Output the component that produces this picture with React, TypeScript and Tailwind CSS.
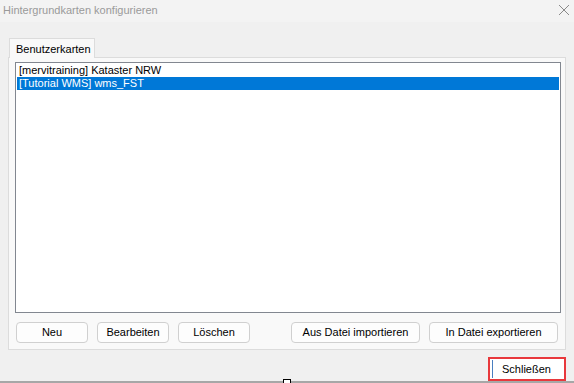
import React from 'react';

const items = ['[mervitraining] Kataster NRW', '[Tutorial WMS] wms_FST'];

const Btn = ({ label, w }: { label: string; w: string }) => (
  <button
    className={`${w} h-[21px] rounded-[4px] border border-[#d0d0d0] bg-[#fdfdfd] text-[11px] leading-none text-black`}
  >
    {label}
  </button>
);

export default function App() {
  return (
    <div
      className="relative w-[574px] h-[383px] overflow-hidden bg-[#f0f0f0] flex flex-col"
      style={{ fontFamily: '"Liberation Sans", Arial, sans-serif' }}
    >
      {/* Titelleiste */}
      <div className="h-[22px] bg-[#f3f3f3] flex items-center justify-between pl-[3px] pr-[4px] pb-[2px]">
        <span className="text-[11px] text-[#9a9a9a]">Hintergrundkarten konfigurieren</span>
        <svg width="12" height="12" viewBox="0 0 12 12">
          <path d="M1 1 L11 11 M11 1 L1 11" stroke="#8a8a8a" strokeWidth="1" />
        </svg>
      </div>

      {/* Inhalt */}
      <div className="flex-1 flex flex-col pt-[16px] px-[8px]">
        <div className="flex pl-[1px]">
          <div className="relative z-10 h-[20px] w-[86px] border border-b-0 border-[#dcdcdc] bg-[#f9f9f9] pl-[6px] text-[11px] leading-[20px] text-black">
            Benutzerkarten
          </div>
        </div>
        <div className="-mt-px h-[293px] w-[558px] border border-[#dcdcdc] bg-[#f9f9f9] flex flex-col pt-[4px] px-[6px]">
          <div className="h-[251px] w-[546px] border border-[#828790] bg-white p-px">
            {items.map((it, i) => (
              <div
                key={it}
                className={`h-[13px] pl-[2px] text-[11px] leading-[13px] ${
                  i === 1 ? 'bg-[#0078d7] text-white' : 'text-black'
                }`}
              >
                {it}
              </div>
            ))}
          </div>
          <div className="mt-[9px] flex">
            <div className="flex gap-[9px] pl-px">
              <Btn label="Neu" w="w-[72px]" />
              <Btn label="Bearbeiten" w="w-[72px]" />
              <Btn label="Löschen" w="w-[72px]" />
            </div>
            <div className="ml-auto flex gap-[9px] pr-px">
              <Btn label="Aus Datei importieren" w="w-[129px]" />
              <Btn label="In Datei exportieren" w="w-[129px]" />
            </div>
          </div>
        </div>

        {/* Schließen */}
        <div className="mt-[7px] flex justify-end">
          <div className="h-[24px] w-[78px] border-2 border-[#e8383c] bg-white flex items-center">
            <div className="h-[18px] w-px bg-[#4a7fc0] ml-[2px]" />
            <span className="flex-1 text-center text-[11px] text-black pr-[4px]">Schließen</span>
          </div>
        </div>
      </div>

      <div className="h-[2px] bg-[#a7a7a7]" />
      <div className="absolute left-[283px] top-[379px] h-[6px] w-[8px] border border-black bg-white" />
    </div>
  );
}
